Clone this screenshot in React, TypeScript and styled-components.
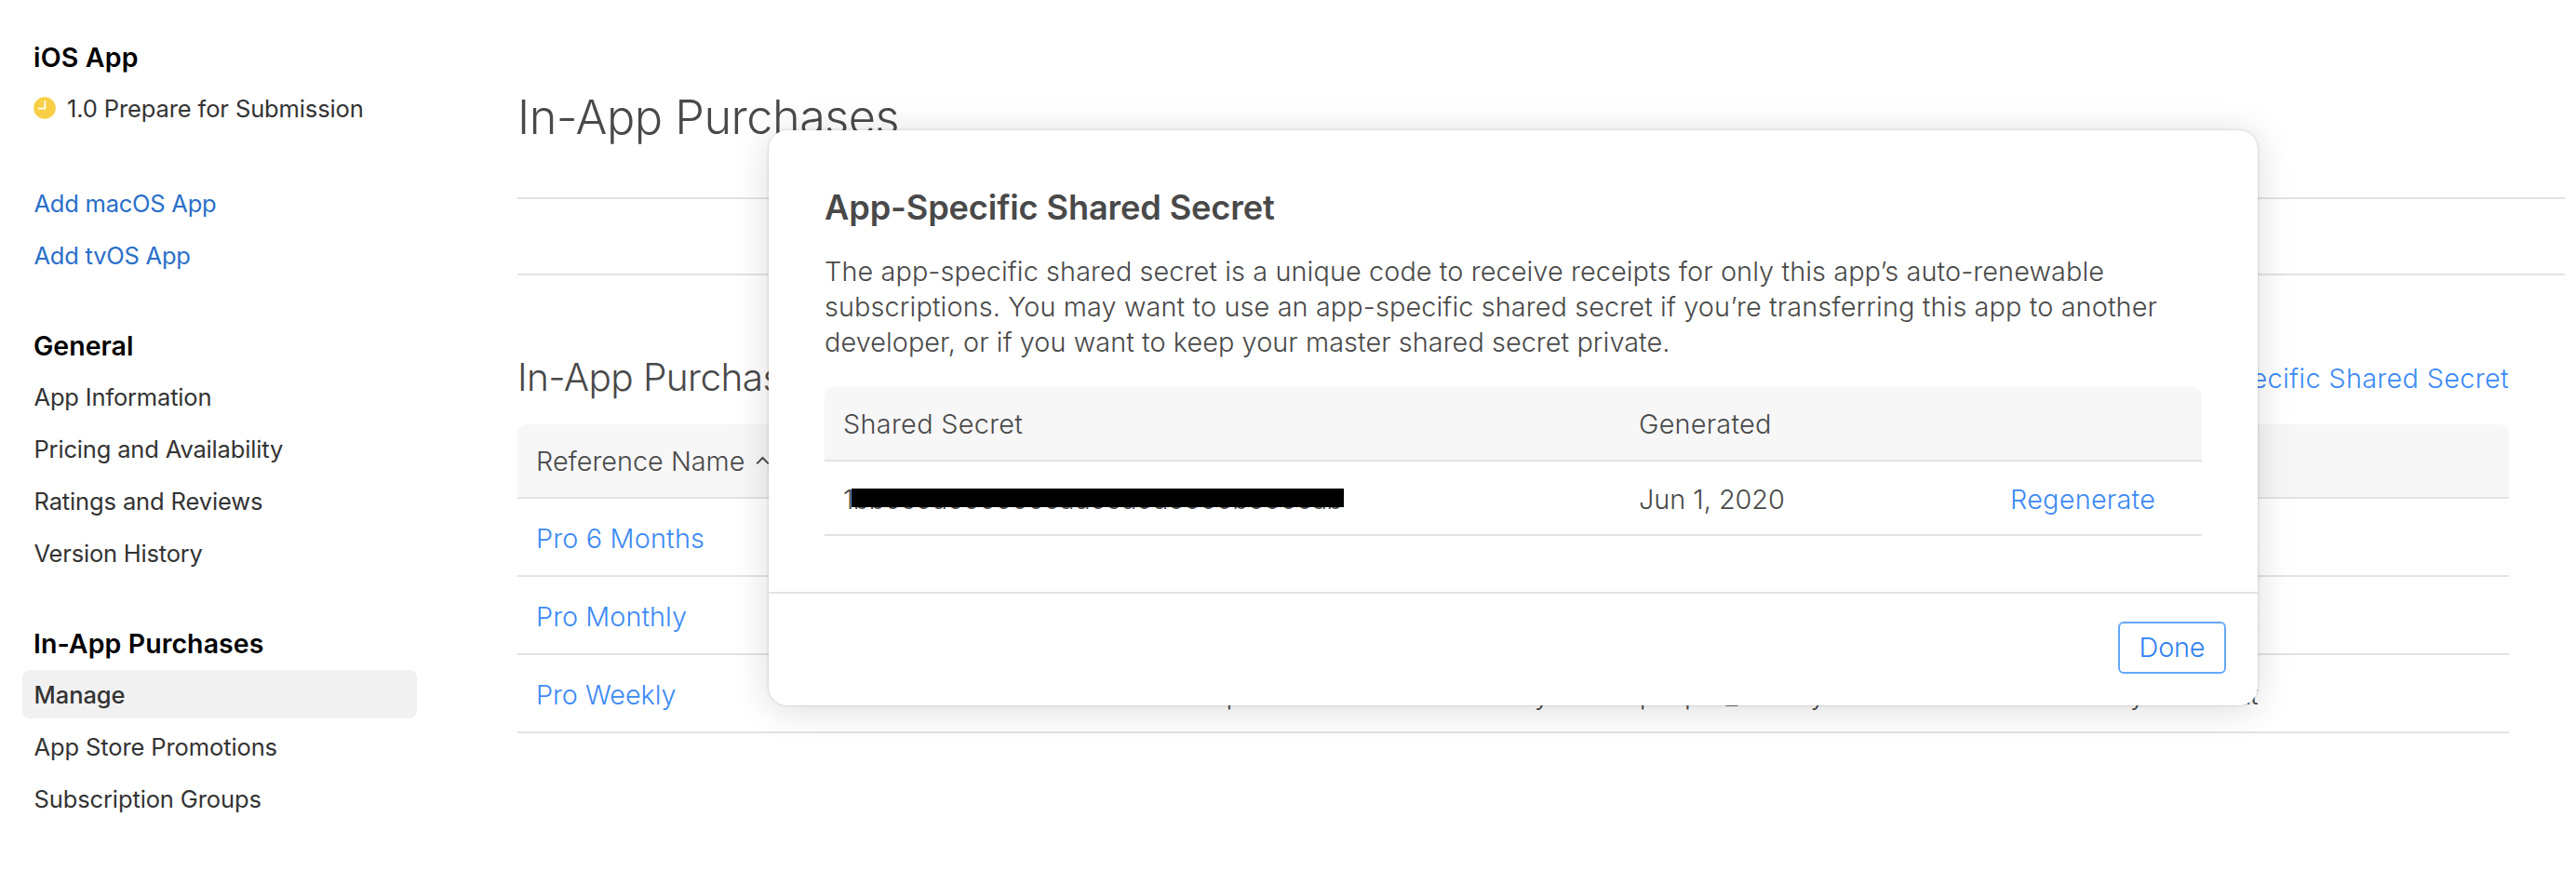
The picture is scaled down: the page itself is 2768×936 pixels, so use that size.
import React from 'react';
import styled, { createGlobalStyle } from 'styled-components';

const GlobalStyle = createGlobalStyle`
  * { box-sizing: border-box; }
  html, body { margin: 0; background: #fff; }
  body {
    font-family: Inter, 'Liberation Sans', sans-serif;
    font-weight: 300;
    font-size: 28.8px;
    color: #494949;
    overflow: hidden;
    -webkit-font-smoothing: antialiased;
  }
  h1, h2, h3, p, ul { margin: 0; padding: 0; }
`;

const Page = styled.div`
  position: relative;
  display: flex;
  width: 2768px;
  height: 936px;
  overflow: hidden;
  background: #fff;
`;

/* ---------- sidebar ---------- */

const Sidebar = styled.nav`
  display: flex;
  flex-direction: column;
  flex: none;
  gap: 46px;
  width: 556px;
  padding: 36px 108px 0 24px;
`;

const NavGroup = styled.section`
  display: flex;
  flex-direction: column;
`;

const NavHeading = styled.h3<{ $track?: number }>`
  height: 54px;
  padding-left: 12px;
  font-size: 28.5px;
  font-weight: 600;
  line-height: 52px;
  letter-spacing: ${(p) => p.$track ?? 0}px;
  color: #000;
`;

const NavList = styled.ul<{ $spaced?: boolean }>`
  display: flex;
  flex-direction: column;
  gap: 4px;
  margin-top: ${(p) => (p.$spaced ? 50 : 0)}px;
  list-style: none;
`;

const NavItem = styled.li<{ $active?: boolean; $link?: boolean; $track?: number }>`
  display: flex;
  align-items: center;
  height: 52px;
  padding: 1px 12px 0 12.5px;
  border-radius: 8px;
  font-size: 25.5px;
  line-height: 52px;
  font-weight: ${(p) => (p.$active ? 500 : 400)};
  letter-spacing: ${(p) => p.$track ?? -0.17}px;
  color: ${(p) => (p.$link ? '#2a6fc9' : '#333')};
  background: ${(p) => (p.$active ? '#f1f1f1' : 'transparent')};
`;

const StatusClock = styled.svg`
  flex: none;
  width: 24px;
  height: 24px;
  margin: 0 12px 1px -0.5px;
`;

/* ---------- main column ---------- */

const Main = styled.main`
  flex: none;
  width: 2200px;
  padding-top: 96px;
`;

const Title = styled.h1`
  height: 60px;
  font-size: 50.4px;
  font-weight: 300;
  line-height: 60px;
  letter-spacing: -0.5px;
`;

const FilterBar = styled.div`
  height: 84px;
  margin-top: 56px;
  border-top: 2px solid #e3e3e3;
  border-bottom: 2px solid #e3e3e3;
`;

const Section = styled.section`
  width: 2140px;
  padding-top: 84px;
`;

const SectionHeader = styled.header`
  display: flex;
  justify-content: space-between;
  align-items: flex-start;
  height: 76px;
`;

const SectionTitle = styled.h2`
  font-size: 40.6px;
  font-weight: 300;
  line-height: 52px;
  letter-spacing: -0.6px;
`;

const Link = styled.a<{ $track?: number }>`
  color: #3b8af5;
  letter-spacing: ${(p) => p.$track ?? 0}px;
  text-decoration: none;
`;

const SectionLink = styled(Link)`
  line-height: 54px;
`;

const Row = styled.div<{ $cols: string; $height: number }>`
  display: grid;
  grid-template-columns: ${(p) => p.$cols};
  align-items: center;
  height: ${(p) => p.$height}px;
  padding-top: 2px;
  border-bottom: 2px solid #e3e3e3;
  white-space: nowrap;
`;

const HeadRow = styled(Row)`
  padding-top: 0;
  border-radius: 10px 10px 0 0;
  background: #f7f7f7;
`;

const Cell = styled.div<{ $track?: number }>`
  position: relative;
  padding-left: 20px;
  letter-spacing: ${(p) => p.$track ?? 0}px;
`;

const SortCaret = styled.svg`
  width: 15px;
  height: 10px;
  margin-left: 12px;
  vertical-align: 6px;
`;

/* ---------- dialog ---------- */

const Dialog = styled.div`
  position: absolute;
  left: 826px;
  top: 140px;
  display: flex;
  flex-direction: column;
  width: 1600px;
  height: 618px;
  border-radius: 20px;
  background: #fff;
  box-shadow: 0 0 3px rgba(0, 0, 0, 0.2), 0 4px 40px rgba(0, 0, 0, 0.14);
`;

const DialogBody = styled.div`
  flex: 1;
  padding: 61px 60px 0;
`;

const DialogTitle = styled.h2`
  font-size: 36.2px;
  font-weight: 600;
  line-height: 45px;
  letter-spacing: -0.14px;
`;

const DialogText = styled.p`
  margin: 27px 0 29px;
  line-height: 38px;
  white-space: nowrap;
`;

const TextLine = styled.span<{ $track: number }>`
  display: block;
  letter-spacing: ${(p) => p.$track}px;
`;

const DialogFooter = styled.footer`
  display: flex;
  justify-content: flex-end;
  height: 122px;
  padding: 30px 34px 0 0;
  border-top: 2px solid #e3e3e3;
`;

const DoneButton = styled.button`
  width: 116px;
  height: 56px;
  padding: 0 0 2px;
  border: 2px solid #64a8fb;
  border-radius: 6px;
  background: #fff;
  color: #2f80f2;
  font: inherit;
  letter-spacing: -0.15px;
`;

const Redaction = styled.span`
  position: absolute;
  left: 29px;
  top: 6px;
  width: 529px;
  height: 20px;
  background: #000;
`;

const LIST_COLS = '410px 572px 668px 1fr';
const SECRET_COLS = '855px 399px 1fr';

const purchases = [
  { name: 'Pro 6 Months', track: 0.18, id: 'com.mycoachspal.pro_6months' },
  { name: 'Pro Monthly', track: 0.05, id: 'com.mycoachspal.pro_monthly' },
  { name: 'Pro Weekly', track: -0.05, id: 'com.mycoachspal.pro_weekly' },
];

export default function App() {
  return (
    <>
      <GlobalStyle />
      <Page>
        <Sidebar>
          <NavGroup>
            <NavHeading $track={0.18}>iOS App</NavHeading>
            <NavList>
              <NavItem $track={-0.12}>
                <StatusClock viewBox="0 0 24 24">
                  <circle cx="12" cy="12" r="11.8" fill="#f7ce46" />
                  <path d="M12.3 4.2V12.6H5.2" fill="none" stroke="#fff" strokeWidth="1.7" />
                </StatusClock>
                1.0 Prepare for Submission
              </NavItem>
            </NavList>
            <NavList $spaced>
              <NavItem $link $track={-0.24}>Add macOS App</NavItem>
              <NavItem $link $track={-0.24}>Add tvOS App</NavItem>
            </NavList>
          </NavGroup>
          <NavGroup>
            <NavHeading>General</NavHeading>
            <NavList>
              <NavItem>App Information</NavItem>
              <NavItem>Pricing and Availability</NavItem>
              <NavItem $track={-0.13}>Ratings and Reviews</NavItem>
              <NavItem $track={-0.2}>Version History</NavItem>
            </NavList>
          </NavGroup>
          <NavGroup>
            <NavHeading $track={0.08}>In-App Purchases</NavHeading>
            <NavList>
              <NavItem $active $track={-0.05}>Manage</NavItem>
              <NavItem $track={-0.11}>App Store Promotions</NavItem>
              <NavItem $track={-0.12}>Subscription Groups</NavItem>
            </NavList>
          </NavGroup>
        </Sidebar>

        <Main>
          <Title>In-App Purchases</Title>
          <FilterBar />
          <Section>
            <SectionHeader>
              <SectionTitle>In-App Purchases (3)</SectionTitle>
              <SectionLink $track={0.35}>App-Specific Shared Secret</SectionLink>
            </SectionHeader>
            <HeadRow $cols={LIST_COLS} $height={80}>
              <Cell>
                Reference Name
                <SortCaret viewBox="0 0 15 10">
                  <path d="M1.2 8.4L7.5 2L13.8 8.4" fill="none" stroke="#494949" strokeWidth="2" />
                </SortCaret>
              </Cell>
              <Cell>Type</Cell>
              <Cell>Product ID</Cell>
              <Cell>Status</Cell>
            </HeadRow>
            {purchases.map((item) => (
              <Row key={item.id} $cols={LIST_COLS} $height={84}>
                <Cell>
                  <Link $track={item.track}>{item.name}</Link>
                </Cell>
                <Cell>Auto-Renewable Subscription</Cell>
                <Cell>{item.id}</Cell>
                <Cell $track={-1.3}>Ready to Submit</Cell>
              </Row>
            ))}
          </Section>
        </Main>

        <Dialog role="dialog">
          <DialogBody>
            <DialogTitle>App-Specific Shared Secret</DialogTitle>
            <DialogText>
              <TextLine $track={0.116}>
                The app-specific shared secret is a unique code to receive receipts for only this app’s auto-renewable
              </TextLine>
              <TextLine $track={0.133}>
                subscriptions. You may want to use an app-specific shared secret if you’re transferring this app to another
              </TextLine>
              <TextLine $track={0.08}>
                developer, or if you want to keep your master shared secret private.
              </TextLine>
            </DialogText>
            <HeadRow $cols={SECRET_COLS} $height={80}>
              <Cell $track={0.32}>Shared Secret</Cell>
              <Cell $track={0.25}>Generated</Cell>
            </HeadRow>
            <Row $cols={SECRET_COLS} $height={80}>
              <Cell $track={-0.48}>
                1bb0c0d0000000ad0cd0d0000b0000ab
                <Redaction />
              </Cell>
              <Cell>Jun 1, 2020</Cell>
              <Cell>
                <Link $track={0.27}>Regenerate</Link>
              </Cell>
            </Row>
          </DialogBody>
          <DialogFooter>
            <DoneButton>Done</DoneButton>
          </DialogFooter>
        </Dialog>
      </Page>
    </>
  );
}
